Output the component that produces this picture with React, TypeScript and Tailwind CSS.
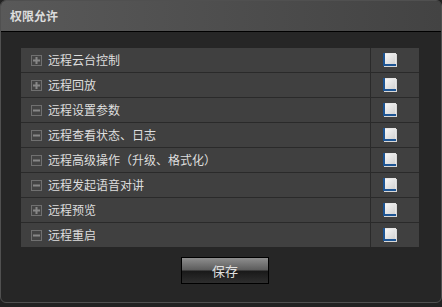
import React from "react";

const rows: { label: string; plus: boolean }[] = [
  { label: "远程云台控制", plus: true },
  { label: "远程回放", plus: true },
  { label: "远程设置参数", plus: false },
  { label: "远程查看状态、日志", plus: false },
  { label: "远程高级操作（升级、格式化）", plus: false },
  { label: "远程发起语音对讲", plus: false },
  { label: "远程预览", plus: true },
  { label: "远程重启", plus: false },
];

function ToggleIcon({ plus }: { plus: boolean }) {
  return (
    <svg width="11" height="11" viewBox="0 0 11 11" className="shrink-0">
      <rect x="0.5" y="0.5" width="10" height="10" fill="#444444" stroke="#707070" />
      <rect x="2" y="4.5" width="7" height="2" fill="#878787" />
      {plus && <rect x="4.5" y="2" width="2" height="7" fill="#878787" />}
    </svg>
  );
}

function Check({ id }: { id: number }) {
  const g = "cg" + id;
  return (
    <svg width="14" height="14" viewBox="0 0 14 14" className="shrink-0">
      <defs>
        <linearGradient id={g} x1="0" y1="0" x2="1" y2="1">
          <stop offset="0" stopColor="#f8f8f8" />
          <stop offset="1" stopColor="#d2d2d2" />
        </linearGradient>
      </defs>
      <rect x="1" y="1" width="13" height="13" fill="#d8d8d8" />
      <rect x="0" y="0" width="13" height="13" fill="#1d5594" />
      <rect x="2" y="1" width="10" height="10" fill={`url(#${g})`} />
      <rect x="2" y="0" width="11" height="1" fill="#e6e6e6" />
      <rect x="12" y="0" width="1" height="11" fill="#e6e6e6" />
    </svg>
  );
}

export default function App() {
  return (
    <div
      className="w-[442px] h-[307px] bg-[#222222] overflow-hidden"
      style={{ fontFamily: '"Noto Sans CJK SC", "Noto Sans", sans-serif' }}
    >
      <div className="h-[303px] flex flex-col rounded-[6px] border border-[#505050] bg-[#262626] overflow-hidden">
        <div className="h-[31px] shrink-0 flex items-center pl-[9px] bg-[linear-gradient(to_right,#595959,#434343)] border-b border-black">
          <span className="text-[12px] font-bold text-[#dcdcdc] leading-none">权限允许</span>
        </div>
        <div className="flex flex-col pt-[16px] pl-[20px]">
          <div className="w-[398px] flex flex-col">
            {rows.map((r, i) => (
              <div
                key={i}
                className={
                  "flex bg-[#404040] " +
                  (i < rows.length - 1 ? "h-[25px] border-b border-[#2a2a2a]" : "h-[24px]")
                }
              >
                <div className="w-[350px] shrink-0 flex items-center pl-[10px] gap-[6px] border-r border-[#2a2a2a]">
                  <ToggleIcon plus={r.plus} />
                  <span className="text-[12px] text-[#dedede] leading-none">{r.label}</span>
                </div>
                <div className="flex-1 flex items-center pl-[12px]">
                  <Check id={i} />
                </div>
              </div>
            ))}
          </div>
          <div className="pl-[160px] pt-[10px]">
            <button className="w-[88px] h-[27px] border border-black bg-[linear-gradient(to_bottom,#8e8e8e_0%,#5c5c5c_48%,#191919_52%,#2e2e2e_100%)] text-[13px] text-[#e0e0e0] flex items-center justify-center leading-none">
              保存
            </button>
          </div>
        </div>
      </div>
    </div>
  );
}
